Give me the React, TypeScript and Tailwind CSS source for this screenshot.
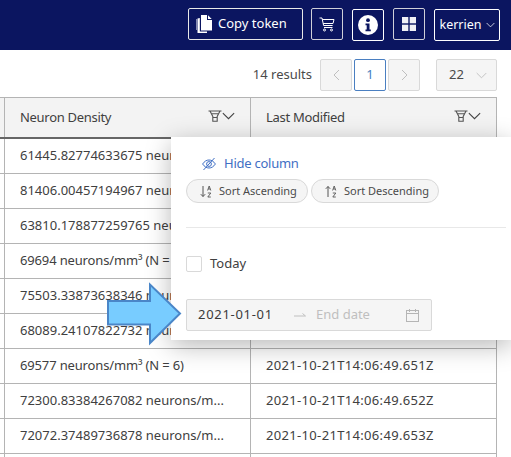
import React from "react";

const Funnel = () => (
  <svg width="14" height="12" viewBox="0 0 14 12" fill="none" stroke="#555" strokeWidth="1.1">
    <path d="M0.500 1h13M2 1l2.800 5.500V11.300h4.400V6.500L12 1M3.400 3.800h7.200M5 7.500h4" />
  </svg>
);
const Chev = ({ c = "#444", w = 13, h = 8 }: { c?: string; w?: number; h?: number }) => (
  <svg width={w} height={h} viewBox="0 0 12 7" fill="none" stroke={c} strokeWidth="1">
    <path d="M0.800 0.800L6 6l5.200-5.200" />
  </svg>
);

const rows: [string, string, string][] = [
  ["61445.82774633675 neurons/m...", "", ""],
  ["81406.00457194967 neurons/m...", "", ""],
  ["63810.178877259765 neurons/...", "", ""],
  ["69694 neurons/mm³ (N = 6)", "", "tracking-[-0.15px]"],
  ["75503.33873638346 neurons/m...", "", ""],
  ["68089.24107822732 neurons/m...", "", ""],
  ["69577 neurons/mm³ (N = 6)", "2021-10-21T14:06:49.651Z", "tracking-[-0.15px]"],
  ["72300.83384267082 neurons/m...", "2021-10-21T14:06:49.652Z", ""],
  ["72072.37489736878 neurons/m...", "2021-10-21T14:06:49.653Z", ""],
  ["", "", ""],
];

const NavBtn = ({ className = "", children }: { className?: string; children: React.ReactNode }) => (
  <div className={`h-[32px] border rounded-[2px] flex items-center justify-center text-white ${className}`}>
    {children}
  </div>
);

const SortIcon = ({ up }: { up?: boolean }) => (
  <svg width="12" height="13" viewBox="0 0 12 13" fill="none" stroke="#555" strokeWidth="1">
    <path d={up ? "M3 12V1.500M0.800 3.800L3 1.500l2.200 2.300" : "M3 1v10.500M0.800 9.200L3 11.500l2.200-2.300"} />
    <path d="M7.600 5.500L9.200 1l1.600 4.500M8.200 4h2M7.800 8h3l-3 4h3" strokeWidth="0.9" />
  </svg>
);

const Pill = ({ w, up, label }: { w: string; up?: boolean; label: string }) => (
  <div className={`${w} h-[24px] rounded-full border border-[#d9d9d9] bg-[#f5f5f5] flex items-center pl-[13px] gap-[7px] text-[11px] text-[#4a4a4a]`}>
    <SortIcon up={up} />
    <span>{label}</span>
  </div>
);

const grid = "grid grid-cols-[5px_246px_246px] w-[497px]";
const cellB = "border-r border-[#b4b4b4]";

export default function App() {
  return (
    <div className="relative w-[511px] h-[457px] overflow-hidden bg-white text-[#404040]" style={{ fontFamily: '"Noto Sans", sans-serif' }}>
      <header className="h-[50px] bg-[#0b1560] flex items-start pt-[8px] pl-[188px]">
        <NavBtn className="w-[115px] border-[#e8e8e8] !justify-start pl-[7px] gap-[6px] text-[13px]">
          <svg width="16" height="18" viewBox="0 0 16 18" fill="#fff">
            <path d="M5 0h6v5h5v10.500H5z" />
            <path d="M12 0.300L15.700 4H12z" />
            <path d="M3.800 3v13.500H11V18H1.500V3.500z" />
            <path d="M0 4h1v11H0z" opacity="0.5" />
          </svg>
          <span>Copy token</span>
        </NavBtn>
        <NavBtn className="w-[32px] ml-[8px] border-[#cfcfd8]">
          <svg width="16" height="15" viewBox="0 0 16 15" fill="none" stroke="#fff" strokeWidth="1">
            <path d="M0.500 1h2.500l1.600 7.500h9M3.300 2.500h11.700l-1 4H4.200M5 10.500h8.500" />
            <circle cx="5.500" cy="13" r="1" />
            <circle cx="12.500" cy="13" r="1" />
          </svg>
        </NavBtn>
        <NavBtn className="w-[32px] ml-[9px] mt-[1px] border-white">
          <svg width="20" height="20" viewBox="0 0 20 20">
            <circle cx="10" cy="10" r="10" fill="#fff" />
            <circle cx="10" cy="5.200" r="1.900" fill="#0b1560" />
            <path d="M7.500 8.500h4v6h1.300v1.800H7.500v-1.800h1.200v-4.200H7.500z" fill="#0b1560" />
          </svg>
        </NavBtn>
        <NavBtn className="w-[32px] ml-[9px] border-[#cfcfd8]">
          <svg width="14" height="14" viewBox="0 0 14 14" fill="#f0f0f5">
            <rect x="0" y="0" width="6.300" height="6.300" />
            <rect x="7.700" y="0" width="6.300" height="6.300" />
            <rect x="0" y="7.700" width="6.300" height="6.300" />
            <rect x="7.700" y="7.700" width="6.300" height="6.300" />
          </svg>
        </NavBtn>
        <NavBtn className="w-[66px] ml-[9px] mt-[1px] border-white gap-[4px] text-[12.5px]">
          <span>kerrien</span>
          <Chev c="#fff" w={9} h={6} />
        </NavBtn>
      </header>

      <div className="h-[47px] w-[497px] flex items-start justify-end pt-[9px] text-[13px]">
        <span className="h-[32px] leading-[30px] mr-[8px] text-[#4a4a4a]">14 results</span>
        <div className="w-[32px] h-[32px] border border-[#d9d9d9] bg-[#f5f5f5] rounded-[2px] flex items-center justify-center">
          <svg width="7" height="12" viewBox="0 0 7 12" fill="none" stroke="#bfbfbf"><path d="M6 1L1 6l5 5" /></svg>
        </div>
        <div className="w-[32px] h-[32px] ml-[2px] border border-[#4a7fc1] rounded-[2px] flex items-center justify-center text-[#4a7fc1]">1</div>
        <div className="w-[32px] h-[32px] ml-[2px] border border-[#d9d9d9] bg-[#f5f5f5] rounded-[2px] flex items-center justify-center">
          <svg width="7" height="12" viewBox="0 0 7 12" fill="none" stroke="#bfbfbf"><path d="M1 1l5 5-5 5" /></svg>
        </div>
        <div className="w-[61px] h-[32px] ml-[16px] border border-[#d9d9d9] bg-[#f5f5f5] rounded-[2px] flex items-center pl-[12px] gap-[12px] text-[#4a4a4a]">
          <span>22</span>
          <Chev c="#bfbfbf" w={11} h={7} />
        </div>
      </div>

      <div className="w-[497px] border-t border-[#b4b4b4] text-[13px]">
        <div className={`${grid} h-[41px] bg-[#f3f3f3] border-b-2 border-[#666]`}>
          <div className={cellB} />
          <div className={`${cellB} pl-[15px] pr-[15px] flex items-center justify-between`}>
            <span className="tracking-[-0.3px]">Neuron Density</span>
            <span className="flex items-center -mt-[3px]"><Funnel /><Chev /></span>
          </div>
          <div className={`${cellB} pl-[15px] pr-[15px] flex items-center justify-between`}>
            <span className="tracking-[-0.3px]">Last Modified</span>
            <span className="flex items-center -mt-[3px]"><Funnel /><Chev /></span>
          </div>
        </div>
        {rows.map(([a, b, t], i) => (
          <div key={i} className={`${grid} h-[35px] border-b border-[#b4b4b4]`}>
            <div className={cellB} />
            <div className={`${cellB} pl-[15px] flex items-center whitespace-nowrap overflow-hidden ${t}`}>{a}</div>
            <div className={`${cellB} pl-[15px] flex items-center whitespace-nowrap tracking-[0.33px]`}>{b}</div>
          </div>
        ))}
      </div>

      <div className="absolute left-[171px] top-[137px] w-[340px] h-[203px] bg-white shadow-[0_6px_24px_rgba(0,0,0,0.28)] pl-[15px] pt-[18px]">
        <div className="flex items-center h-[18px] ml-[16px] gap-[8px] text-[13px] text-[#3f6fc4] tracking-[-0.25px]">
          <svg width="14" height="14" viewBox="0 0 14 14" fill="none" stroke="#3f6fc4" strokeWidth="1">
            <path d="M0.600 7C2.500 4.200 4.600 3 7 3s4.500 1.200 6.400 4C11.500 9.800 9.400 11 7 11S2.500 9.800 0.600 7z" />
            <circle cx="7" cy="7" r="2.400" />
            <path d="M1.500 13L12.500 1" />
          </svg>
          <span>Hide column</span>
        </div>
        <div className="flex gap-[3px] mt-[6px]">
          <Pill w="w-[122px]" label="Sort Ascending" />
          <Pill w="w-[128px]" up label="Sort Descending" />
        </div>
        <div className="mt-[24px] h-px bg-[#e8e8e8] w-[320px]" />
        <div className="flex items-center mt-[27px] h-[18px] gap-[8px] text-[13px]">
          <div className="w-[16px] h-[16px] border border-[#d9d9d9] rounded-[2px] bg-white" />
          <span>Today</span>
        </div>
        <div className="mt-[26px] w-[246px] h-[32px] border border-[#d9d9d9] rounded-[2px] bg-[#f5f5f5] flex items-center pl-[11px] text-[13px]">
          <span className="w-[96px] tracking-[0.7px] text-[#3a3a3a]">2021-01-01</span>
          <svg width="12" height="6" viewBox="0 0 12 6" fill="none" stroke="#bfbfbf"><path d="M0 4h11.500M8.500 1.500L11.500 4" /></svg>
          <span className="ml-[10px] text-[#bfbfbf]">End date</span>
          <svg className="ml-auto mr-[12px]" width="13" height="13" viewBox="0 0 13 13" fill="none" stroke="#b5b5b5">
            <rect x="0.500" y="1.500" width="12" height="11" />
            <path d="M0.500 4.500h12M3.500 0v3M9.500 0v3" />
          </svg>
        </div>
      </div>

      <svg className="absolute left-[105px] top-[280px]" width="80" height="68" viewBox="0 0 80 68">
        <path d="M3 21H45V4.500L75 33.500 45 63V44.500H3z" fill="#78ccff" stroke="#4a86c8" strokeWidth="2" />
      </svg>
    </div>
  );
}
